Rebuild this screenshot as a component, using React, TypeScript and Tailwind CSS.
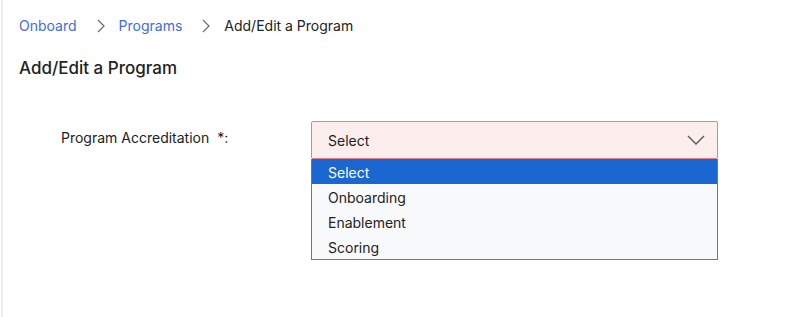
import { useState } from 'react'

const options = ['Select', 'Onboarding', 'Enablement', 'Scoring']

function Crumb({ children }: { children: React.ReactNode }) {
  return <a className="text-[#3d6ce0] hover:underline cursor-pointer">{children}</a>
}

function Sep() {
  return (
    <svg width="8" height="14" viewBox="0 0 8 14" className="ml-[20px] mr-[14px]" fill="none">
      <polyline points="1,1 7,7 1,13" stroke="#6b6b6b" strokeWidth="1.2" />
    </svg>
  )
}

export default function App() {
  const [value] = useState('Select')

  return (
    <div className="h-[317px] w-full bg-white font-['Inter',sans-serif] text-[#222] flex">
      <div className="w-[3px] shrink-0 border-r-2 border-[#e9edf3]" />
      <div className="flex-1 pl-[16px]">
        <nav className="flex items-center text-[14px] leading-[20px] pt-[16px]">
          <Crumb>Onboard</Crumb>
          <Sep />
          <Crumb>Programs</Crumb>
          <Sep />
          <span className="text-[#222]">Add/Edit a Program</span>
        </nav>

        <h1 className="text-[17px] font-medium leading-[24px] mt-[20px]">Add/Edit a Program</h1>

        <div className="flex mt-[41px] text-[14px]">
          <label className="w-[292px] pl-[42px] pt-[9px] leading-[16px]">
            Program Accreditation&nbsp; *:
          </label>
          <div className="relative w-[407px]">
            <div className="h-[38px] flex items-center justify-between pl-[16px] pr-[12px] bg-[#fdeeee] border border-[#ec7d7d] rounded-[2px]">
              <span>{value}</span>
              <svg width="18" height="10" viewBox="0 0 18 10" fill="none">
                <polyline points="1,1 9,9 17,1" stroke="#5f5f5f" strokeWidth="1.5" />
              </svg>
            </div>
            <ul className="absolute left-0 right-0 top-[38px] bg-[#f8f9fb] border border-[#767676] border-t-0">
              {options.map((o, i) => (
                <li
                  key={o}
                  className={
                    i === 0
                      ? 'h-[25px] flex items-center pl-[16px] pt-[2px] bg-[#1a67d2] text-white'
                      : 'h-[25px] flex items-center pl-[16px] pt-[2px] text-[#222]'
                  }
                >
                  {o}
                </li>
              ))}
            </ul>
          </div>
        </div>
      </div>
    </div>
  )
}
